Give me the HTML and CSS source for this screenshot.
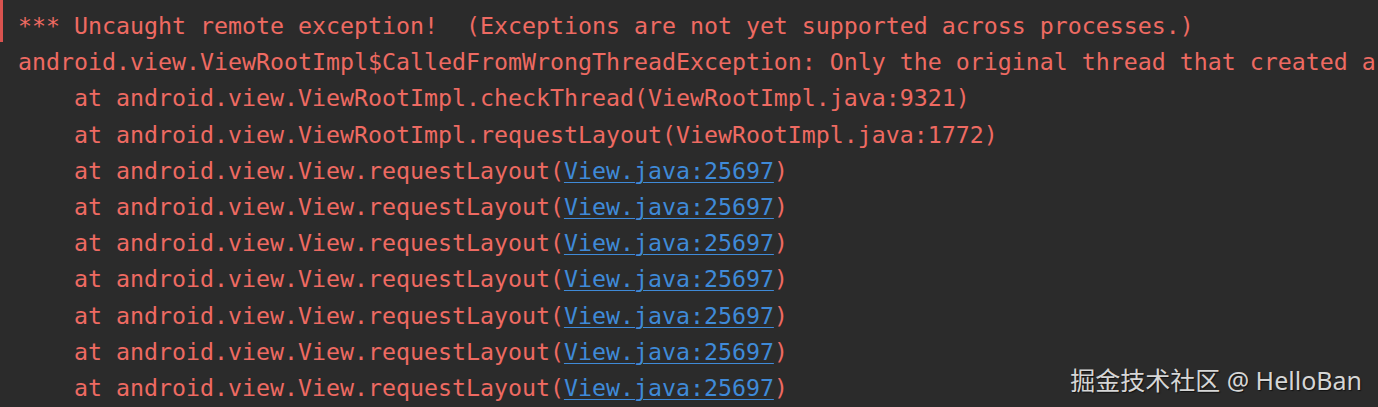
FILE: index.html
```html
<!DOCTYPE html>
<html>
<head>
<meta charset="utf-8">
<link rel="stylesheet" href="styles.css">
</head>
<body>
<div class="console">
  <div class="line first">*** Uncaught remote exception!  (Exceptions are not yet supported across processes.)</div>
  <div class="line">android.view.ViewRootImpl$CalledFromWrongThreadException: Only the original thread that created a</div>
  <div class="line">    at android.view.ViewRootImpl.checkThread(ViewRootImpl.java:9321)</div>
  <div class="line">    at android.view.ViewRootImpl.requestLayout(ViewRootImpl.java:1772)</div>
  <div class="line">    at android.view.View.requestLayout(<a class="link">View.java:25697</a>)</div>
  <div class="line">    at android.view.View.requestLayout(<a class="link">View.java:25697</a>)</div>
  <div class="line">    at android.view.View.requestLayout(<a class="link">View.java:25697</a>)</div>
  <div class="line">    at android.view.View.requestLayout(<a class="link">View.java:25697</a>)</div>
  <div class="line">    at android.view.View.requestLayout(<a class="link">View.java:25697</a>)</div>
  <div class="line">    at android.view.View.requestLayout(<a class="link">View.java:25697</a>)</div>
  <div class="line">    at android.view.View.requestLayout(<a class="link">View.java:25697</a>)</div>
</div>
<div class="watermark">掘金技术社区 @ HelloBan</div>
</body>
</html>
```
FILE: styles.css
```css
html, body {
  margin: 0;
  padding: 0;
  width: 1378px;
  height: 407px;
  overflow: hidden;
  background: #2b2b2b;
}
.console {
  padding: 8px 0 0 18px;
  font-family: "DejaVu Sans Mono", "Liberation Mono", monospace;
  font-size: 23.25px;
  line-height: 36.2px;
  color: #ee6a62;
}
.line {
  white-space: pre;
  position: relative;
}
.first::before {
  content: "";
  position: absolute;
  left: -18px;
  top: -8px;
  width: 3px;
  height: 42px;
  background: #d9534f;
}
.link {
  color: #3f8ad8;
  text-decoration: underline;
  text-underline-offset: 3px;
  text-decoration-thickness: 1px;
}
.watermark {
  position: absolute;
  right: 16px;
  bottom: 10px;
  font-family: "Noto Sans", "Noto Sans CJK SC", sans-serif;
  font-size: 25px;
  color: #d6d6d6;
  text-shadow: 1px 1px 1px rgba(0,0,0,0.6);
}
```
